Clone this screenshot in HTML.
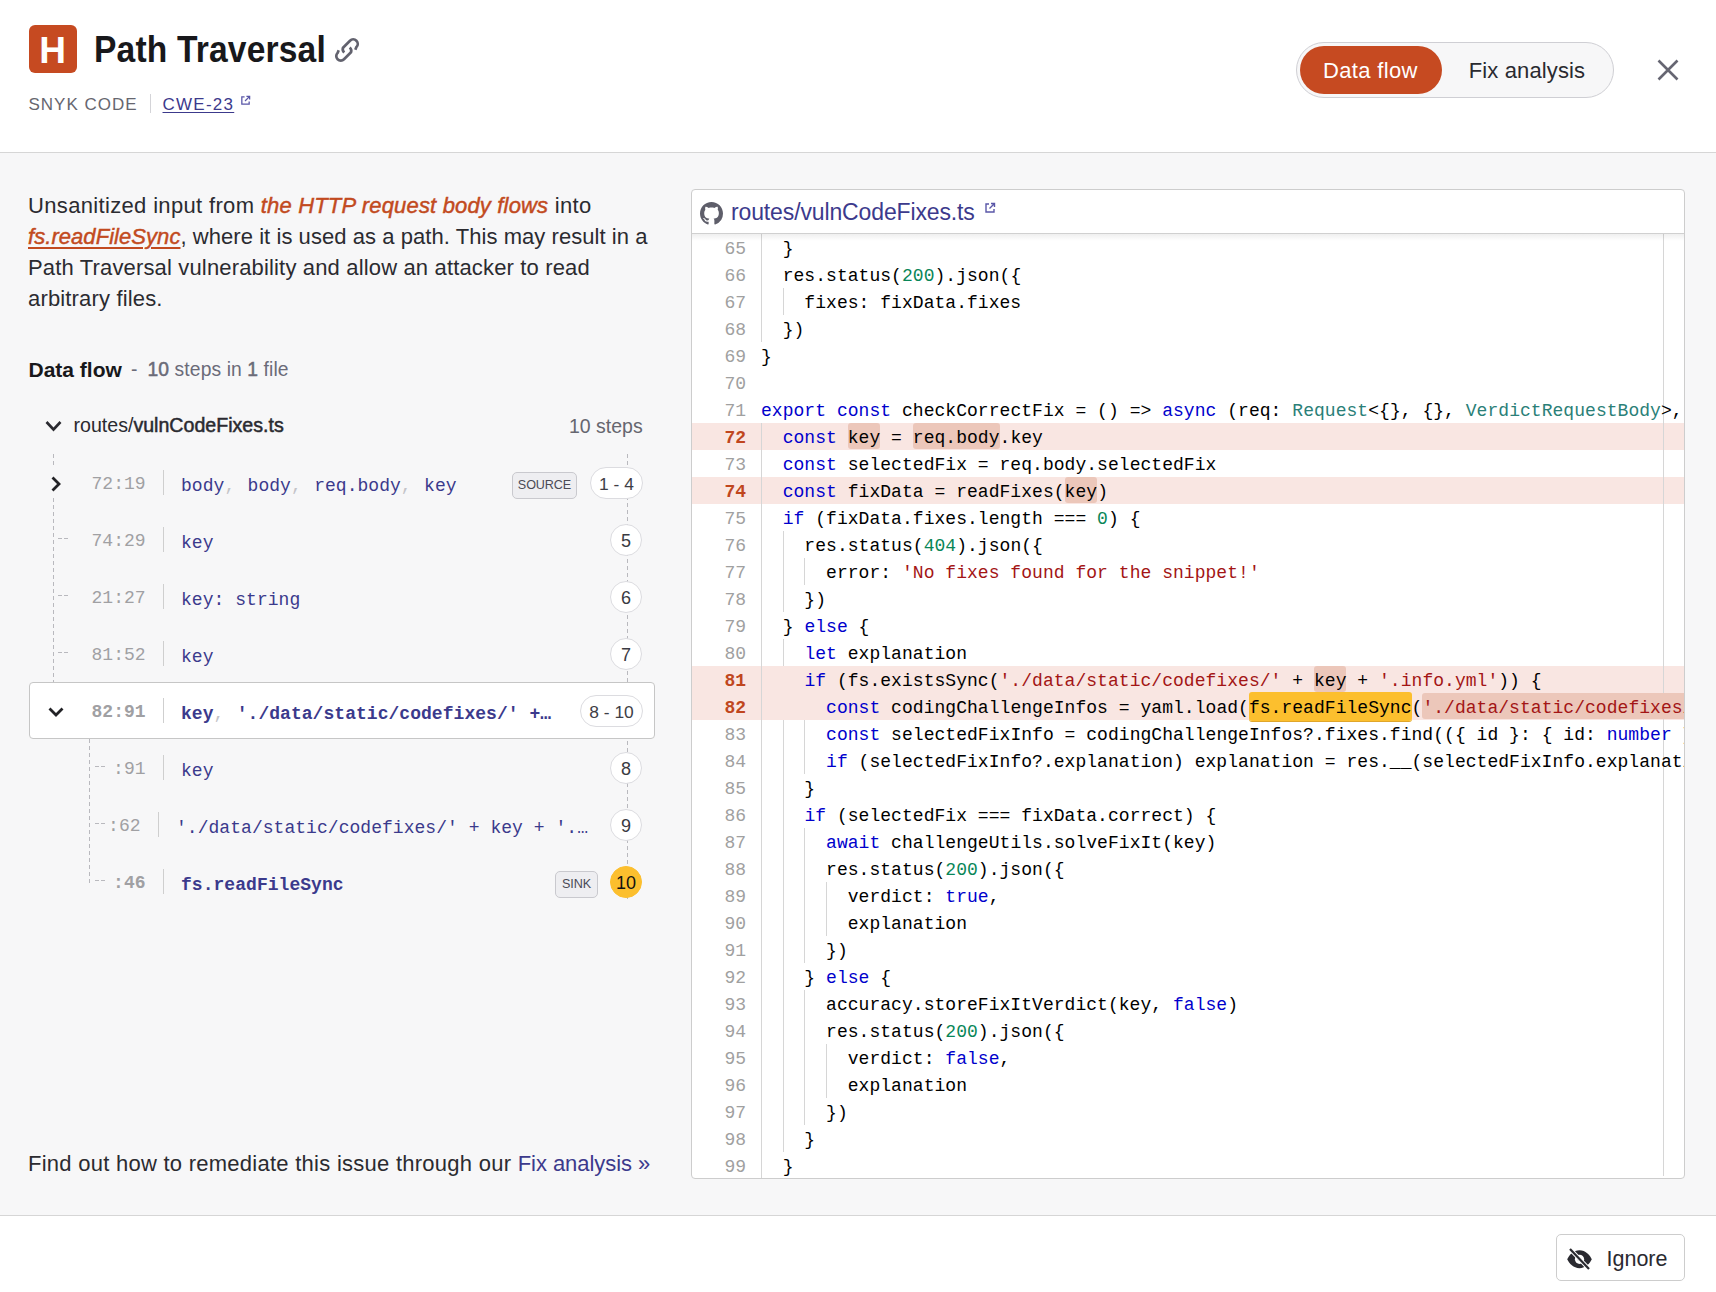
<!DOCTYPE html><html><head><meta charset="utf-8"><title>Path Traversal</title><style>*{margin:0;padding:0}
html,body{width:1716px;height:1292px;overflow:hidden;background:#fff}
body{position:relative;font-family:"Liberation Sans",sans-serif}
i.hl{color:#c24a20;font-style:italic;-webkit-text-stroke:0.45px #c24a20}
.md{font-weight:400;-webkit-text-stroke:0.5px currentColor}
i.u{text-decoration:underline;text-decoration-thickness:2px;text-underline-offset:3px}
</style></head><body><div style="position:absolute;left:0px;top:0px;width:1716px;height:152px;background:#fff"></div>
<div style="position:absolute;left:0px;top:152px;width:1716px;height:1px;background:#d6d6d6"></div>
<div style="position:absolute;left:29px;top:25px;width:48px;height:48px;background:#c64a21;border-radius:6px"></div>
<div style="position:absolute;left:39.3px;top:31.67px;font-size:37px;line-height:37px;color:#fff;font-weight:700;font-style:normal;font-family:'Liberation Sans', sans-serif;letter-spacing:0px;white-space:pre;">H</div>
<div style="position:absolute;left:93.8px;top:32.10px;font-size:36.5px;line-height:36.5px;color:#18181b;font-weight:700;font-style:normal;font-family:'Liberation Sans', sans-serif;letter-spacing:0.18px;white-space:pre;transform:scaleX(0.92);transform-origin:0 0">Path Traversal</div>
<svg style="position:absolute;left:330px;top:33px" width="34" height="34" viewBox="0 0 34 34" fill="none" stroke="#62626e" stroke-width="2.7" stroke-linecap="butt"><path d="M25.3 16.8L26.4 14.1A4.5 4.5 0 0 0 20 7.7L13 14.7A4.5 4.5 0 0 0 14.3 19.6"/><path d="M8.7 17.2L7.6 19.9A4.5 4.5 0 0 0 14 26.3L21 19.3A4.5 4.5 0 0 0 19.7 14.4"/></svg>
<div style="position:absolute;left:28.5px;top:96.11px;font-size:17px;line-height:17px;color:#66666f;font-weight:400;font-style:normal;font-family:'Liberation Sans', sans-serif;letter-spacing:1.0px;white-space:pre;">SNYK CODE</div>
<div style="position:absolute;left:150px;top:94px;width:1px;height:19px;background:#d4d4d8"></div>
<div style="position:absolute;left:162.5px;top:96.11px;font-size:17px;line-height:17px;color:#3c3a8c;font-weight:400;font-style:normal;font-family:'Liberation Sans', sans-serif;letter-spacing:1.25px;white-space:pre;text-decoration:underline;text-underline-offset:2px;text-decoration-thickness:1px">CWE-23</div>
<svg style="position:absolute;left:240px;top:95px" width="11" height="11" viewBox="0 0 12 12" fill="none" stroke="#5a57a8" stroke-width="1.4"><path d="M5 2H2v8h8V7"/><path d="M7 1.5h3.5V5M10.5 1.5 5.5 6.5"/></svg>
<div style="position:absolute;left:1296px;top:42px;width:316px;height:54px;background:#f7f7f8;border:1px solid #cfcfd4;border-radius:28px"></div>
<div style="position:absolute;left:1300px;top:46px;width:142px;height:48px;background:#c64a21;border-radius:24px"></div>
<div style="position:absolute;left:1323px;top:59.67px;font-size:22px;line-height:22px;color:#fff;font-weight:400;font-style:normal;font-family:'Liberation Sans', sans-serif;letter-spacing:0.35px;white-space:pre;">Data flow</div>
<div style="position:absolute;left:1468.8px;top:59.67px;font-size:22px;line-height:22px;color:#2a2a30;font-weight:400;font-style:normal;font-family:'Liberation Sans', sans-serif;letter-spacing:0.12px;white-space:pre;">Fix analysis</div>
<svg style="position:absolute;left:1656px;top:58px" width="24" height="24" viewBox="0 0 24 24" stroke="#666672" stroke-width="2.6" stroke-linecap="butt"><path d="M2.5 2.5 21.5 21.5M21.5 2.5 2.5 21.5"/></svg>
<div style="position:absolute;left:0px;top:153px;width:1716px;height:1062px;background:#f7f7f8"></div>
<div style="position:absolute;left:0px;top:1215px;width:1716px;height:1px;background:#d6d6d6"></div>
<div style="position:absolute;left:0px;top:1216px;width:1716px;height:76px;background:#fff"></div>
<div style="position:absolute;left:28px;top:194.57px;font-size:22px;line-height:22px;color:#2b2b30;font-weight:400;font-style:normal;font-family:'Liberation Sans', sans-serif;letter-spacing:0.34px;white-space:pre;">Unsanitized input from <i class="hl" style="letter-spacing:0.17px">the HTTP request body flows</i> into</div>
<div style="position:absolute;left:28px;top:225.67px;font-size:22px;line-height:22px;color:#2b2b30;font-weight:400;font-style:normal;font-family:'Liberation Sans', sans-serif;letter-spacing:0.056px;white-space:pre;"><i class="hl u">fs.readFileSync</i>, where it is used as a path. This may result in a</div>
<div style="position:absolute;left:28px;top:257.17px;font-size:22px;line-height:22px;color:#2b2b30;font-weight:400;font-style:normal;font-family:'Liberation Sans', sans-serif;letter-spacing:0.158px;white-space:pre;">Path Traversal vulnerability and allow an attacker to read</div>
<div style="position:absolute;left:28px;top:287.87px;font-size:22px;line-height:22px;color:#2b2b30;font-weight:400;font-style:normal;font-family:'Liberation Sans', sans-serif;letter-spacing:0.158px;white-space:pre;">arbitrary files.</div>
<div style="position:absolute;left:28.5px;top:359.02px;font-size:21px;line-height:21px;color:#18181b;font-weight:700;font-style:normal;font-family:'Liberation Sans', sans-serif;letter-spacing:0px;white-space:pre;">Data flow</div>
<div style="position:absolute;left:131px;top:360.46px;font-size:19.3px;line-height:19.3px;color:#6b6b78;font-weight:400;font-style:normal;font-family:'Liberation Sans', sans-serif;letter-spacing:0px;white-space:pre;">-</div>
<div style="position:absolute;left:147.5px;top:360.46px;font-size:19.3px;line-height:19.3px;color:#6b6b78;font-weight:400;font-style:normal;font-family:'Liberation Sans', sans-serif;letter-spacing:0.1px;white-space:pre;"><b class="md">10</b> steps in <b class="md">1</b> file</div>
<svg style="position:absolute;left:43.5px;top:419px" width="18" height="14" viewBox="0 0 18 14" fill="none" stroke="#2a2a30" stroke-width="2.6"><path d="M2.5 3l7 7.5 7-7.5"/></svg>
<div style="position:absolute;left:73.5px;top:416.40px;font-size:19.6px;line-height:19.6px;color:#2a2a30;font-weight:400;font-style:normal;font-family:'Liberation Sans', sans-serif;letter-spacing:0px;white-space:pre;">routes/<span class="md">vulnCodeFixes.ts</span></div>
<div style="position:absolute;left:569px;top:416.69px;font-size:19.5px;line-height:19.5px;color:#66666f;font-weight:400;font-style:normal;font-family:'Liberation Sans', sans-serif;letter-spacing:0px;white-space:pre;">10 steps</div>
<div style="position:absolute;left:53px;top:454px;width:1px;height:12px;background:repeating-linear-gradient(to bottom,#b9b9be 0 4px,transparent 4px 7px)"></div>
<div style="position:absolute;left:53px;top:498px;width:1px;height:184px;background:repeating-linear-gradient(to bottom,#b9b9be 0 4px,transparent 4px 7px)"></div>
<div style="position:absolute;left:627px;top:454px;width:1px;height:446px;background:repeating-linear-gradient(to bottom,#b9b9be 0 4px,transparent 4px 7px)"></div>
<svg style="position:absolute;left:49px;top:475px" width="14" height="18" viewBox="0 0 14 18" fill="none" stroke="#222226" stroke-width="2.8"><path d="M3.5 2.5l6.5 6.5-6.5 6.5"/></svg>
<div style="position:absolute;left:91.5px;top:475.21px;font-size:18px;line-height:18px;color:#a0a0a3;font-weight:400;font-style:normal;font-family:'Liberation Mono', monospace;letter-spacing:0.04px;white-space:pre;">72:19</div>
<div style="position:absolute;left:163px;top:469.5px;width:1px;height:25px;background:#cfcfcf"></div>
<div style="position:absolute;left:181px;top:477.01px;font-size:18px;line-height:18px;color:#3b3a8c;font-weight:400;font-style:normal;font-family:'Liberation Mono', monospace;letter-spacing:0.04px;white-space:pre;">body<span style="color:#c4c4c8;margin-right:1.5px">, </span>body<span style="color:#c4c4c8;margin-right:1.5px">, </span>req.body<span style="color:#c4c4c8;margin-right:1.5px">, </span>key</div>
<div style="position:absolute;left:512px;top:472px;width:65px;height:27px;box-sizing:border-box;border:1px solid #c9c9ce;border-radius:5px;background:#eeeef1;color:#4a4a55;font-family:'Liberation Sans', sans-serif;font-size:12.6px;letter-spacing:-0.1px;line-height:25px;text-align:center">SOURCE</div>
<div style="position:absolute;left:590px;top:467px;width:53px;height:32px;box-sizing:border-box;border:1px solid #dcdce0;border-radius:16px;background:#fff;color:#3e3e46;font-family:'Liberation Sans', sans-serif;font-size:17.4px;line-height:32px;text-align:center;white-space:pre">1 - 4</div>
<div style="position:absolute;left:58px;top:538px;width:11px;height:1px;background:repeating-linear-gradient(to right,#b9b9be 0 4px,transparent 4px 6px)"></div>
<div style="position:absolute;left:91.5px;top:532.21px;font-size:18px;line-height:18px;color:#a0a0a3;font-weight:400;font-style:normal;font-family:'Liberation Mono', monospace;letter-spacing:0.04px;white-space:pre;">74:29</div>
<div style="position:absolute;left:163px;top:526.5px;width:1px;height:25px;background:#cfcfcf"></div>
<div style="position:absolute;left:181px;top:534.01px;font-size:18px;line-height:18px;color:#3b3a8c;font-weight:400;font-style:normal;font-family:'Liberation Mono', monospace;letter-spacing:0.04px;white-space:pre;">key</div>
<div style="position:absolute;left:610px;top:524px;width:32px;height:32px;box-sizing:border-box;border:1px solid #dcdce0;border-radius:50%;background:#fff;color:#3a3a42;font-family:'Liberation Sans', sans-serif;font-size:18px;line-height:32.5px;text-align:center">5</div>
<div style="position:absolute;left:58px;top:595px;width:11px;height:1px;background:repeating-linear-gradient(to right,#b9b9be 0 4px,transparent 4px 6px)"></div>
<div style="position:absolute;left:91.5px;top:589.21px;font-size:18px;line-height:18px;color:#a0a0a3;font-weight:400;font-style:normal;font-family:'Liberation Mono', monospace;letter-spacing:0.04px;white-space:pre;">21:27</div>
<div style="position:absolute;left:163px;top:583.5px;width:1px;height:25px;background:#cfcfcf"></div>
<div style="position:absolute;left:181px;top:591.01px;font-size:18px;line-height:18px;color:#3b3a8c;font-weight:400;font-style:normal;font-family:'Liberation Mono', monospace;letter-spacing:0.04px;white-space:pre;">key: string</div>
<div style="position:absolute;left:610px;top:581px;width:32px;height:32px;box-sizing:border-box;border:1px solid #dcdce0;border-radius:50%;background:#fff;color:#3a3a42;font-family:'Liberation Sans', sans-serif;font-size:18px;line-height:32.5px;text-align:center">6</div>
<div style="position:absolute;left:58px;top:652px;width:11px;height:1px;background:repeating-linear-gradient(to right,#b9b9be 0 4px,transparent 4px 6px)"></div>
<div style="position:absolute;left:91.5px;top:646.21px;font-size:18px;line-height:18px;color:#a0a0a3;font-weight:400;font-style:normal;font-family:'Liberation Mono', monospace;letter-spacing:0.04px;white-space:pre;">81:52</div>
<div style="position:absolute;left:163px;top:640.5px;width:1px;height:25px;background:#cfcfcf"></div>
<div style="position:absolute;left:181px;top:648.01px;font-size:18px;line-height:18px;color:#3b3a8c;font-weight:400;font-style:normal;font-family:'Liberation Mono', monospace;letter-spacing:0.04px;white-space:pre;">key</div>
<div style="position:absolute;left:610px;top:638px;width:32px;height:32px;box-sizing:border-box;border:1px solid #dcdce0;border-radius:50%;background:#fff;color:#3a3a42;font-family:'Liberation Sans', sans-serif;font-size:18px;line-height:32.5px;text-align:center">7</div>
<div style="position:absolute;left:29px;top:682px;width:626px;height:57px;box-sizing:border-box;background:#fff;border:1px solid #c6c6c6;border-radius:4px"></div>
<svg style="position:absolute;left:46.7px;top:705px" width="18" height="14" viewBox="0 0 18 14" fill="none" stroke="#222226" stroke-width="2.8"><path d="M2.5 3.5l6.5 6.5 6.5-6.5"/></svg>
<div style="position:absolute;left:91.5px;top:703.21px;font-size:18px;line-height:18px;color:#a0a0a3;font-weight:700;font-style:normal;font-family:'Liberation Mono', monospace;letter-spacing:0.04px;white-space:pre;">82:91</div>
<div style="position:absolute;left:163px;top:697.5px;width:1px;height:25px;background:#cfcfcf"></div>
<div style="position:absolute;left:181px;top:705.01px;font-size:18px;line-height:18px;color:#3b3a8c;font-weight:700;font-style:normal;font-family:'Liberation Mono', monospace;letter-spacing:0.04px;white-space:pre;">key<span style="color:#c4c4c8;margin-right:1.5px;font-weight:400">, </span>&#x27;./data/static/codefixes/&#x27; +…</div>
<div style="position:absolute;left:580px;top:695px;width:63px;height:32px;box-sizing:border-box;border:1px solid #dcdce0;border-radius:16px;background:#fff;color:#3e3e46;font-family:'Liberation Sans', sans-serif;font-size:17.4px;line-height:32px;text-align:center;white-space:pre">8 - 10</div>
<div style="position:absolute;left:89px;top:739px;width:1px;height:145px;background:repeating-linear-gradient(to bottom,#b9b9be 0 4px,transparent 4px 7px)"></div>
<div style="position:absolute;left:95px;top:766px;width:10px;height:1px;background:repeating-linear-gradient(to right,#b9b9be 0 4px,transparent 4px 6px)"></div>
<div style="position:absolute;left:113.1px;top:760.21px;font-size:18px;line-height:18px;color:#a0a0a3;font-weight:400;font-style:normal;font-family:'Liberation Mono', monospace;letter-spacing:0.04px;white-space:pre;">:91</div>
<div style="position:absolute;left:163px;top:754.5px;width:1px;height:25px;background:#cfcfcf"></div>
<div style="position:absolute;left:181px;top:762.01px;font-size:18px;line-height:18px;color:#3b3a8c;font-weight:400;font-style:normal;font-family:'Liberation Mono', monospace;letter-spacing:0.04px;white-space:pre;">key</div>
<div style="position:absolute;left:610px;top:752px;width:32px;height:32px;box-sizing:border-box;border:1px solid #dcdce0;border-radius:50%;background:#fff;color:#3a3a42;font-family:'Liberation Sans', sans-serif;font-size:18px;line-height:32.5px;text-align:center">8</div>
<div style="position:absolute;left:95px;top:823px;width:10px;height:1px;background:repeating-linear-gradient(to right,#b9b9be 0 4px,transparent 4px 6px)"></div>
<div style="position:absolute;left:108.1px;top:817.21px;font-size:18px;line-height:18px;color:#a0a0a3;font-weight:400;font-style:normal;font-family:'Liberation Mono', monospace;letter-spacing:0.04px;white-space:pre;">:62</div>
<div style="position:absolute;left:158px;top:811.5px;width:1px;height:25px;background:#cfcfcf"></div>
<div style="position:absolute;left:176px;top:819.01px;font-size:18px;line-height:18px;color:#3b3a8c;font-weight:400;font-style:normal;font-family:'Liberation Mono', monospace;letter-spacing:0.04px;white-space:pre;">&#x27;./data/static/codefixes/&#x27; + key + &#x27;.…</div>
<div style="position:absolute;left:610px;top:809px;width:32px;height:32px;box-sizing:border-box;border:1px solid #dcdce0;border-radius:50%;background:#fff;color:#3a3a42;font-family:'Liberation Sans', sans-serif;font-size:18px;line-height:32.5px;text-align:center">9</div>
<div style="position:absolute;left:95px;top:880px;width:10px;height:1px;background:repeating-linear-gradient(to right,#b9b9be 0 4px,transparent 4px 6px)"></div>
<div style="position:absolute;left:113.1px;top:874.21px;font-size:18px;line-height:18px;color:#a0a0a3;font-weight:700;font-style:normal;font-family:'Liberation Mono', monospace;letter-spacing:0.04px;white-space:pre;">:46</div>
<div style="position:absolute;left:163px;top:868.5px;width:1px;height:25px;background:#cfcfcf"></div>
<div style="position:absolute;left:181px;top:876.01px;font-size:18px;line-height:18px;color:#3b3a8c;font-weight:700;font-style:normal;font-family:'Liberation Mono', monospace;letter-spacing:0.04px;white-space:pre;">fs.readFileSync</div>
<div style="position:absolute;left:610px;top:866px;width:32px;height:32px;box-sizing:border-box;border:1px solid #fcbf2e;border-radius:50%;background:#fcbf2e;color:#111;font-family:'Liberation Sans', sans-serif;font-size:18px;line-height:32.5px;text-align:center">10</div>
<div style="position:absolute;left:555px;top:871px;width:43px;height:27px;box-sizing:border-box;border:1px solid #c9c9ce;border-radius:5px;background:#eeeef1;color:#4a4a55;font-family:'Liberation Sans', sans-serif;font-size:12.6px;letter-spacing:-0.1px;line-height:25px;text-align:center">SINK</div>
<div style="position:absolute;left:28px;top:1152.67px;font-size:22px;line-height:22px;color:#2b2b30;font-weight:400;font-style:normal;font-family:'Liberation Sans', sans-serif;letter-spacing:0.26px;white-space:pre;">Find out how to remediate this issue through our <span style="color:#3c3a8c;letter-spacing:-0.05px">Fix analysis »</span></div>
<div style="position:absolute;left:1556px;top:1234px;width:129px;height:47px;box-sizing:border-box;background:#fff;border:1px solid #cdcdcd;border-radius:5px"></div>
<svg style="position:absolute;left:1566px;top:1247px" width="27" height="24" viewBox="0 0 27 24"><path d="M13.5 3.2C7.5 3.2 3.2 8 1.2 12.3 3.2 16.6 7.5 21.2 13.5 21.2s10.3-4.6 12.3-8.9C23.8 8 19.5 3.2 13.5 3.2z" fill="#2a2a30"/><circle cx="13.5" cy="12.3" r="4.6" fill="#fff"/><circle cx="13.5" cy="12.3" r="2" fill="#2a2a30"/><path d="M4 2 23 22" stroke="#fff" stroke-width="4"/><path d="M4 2 23 22" stroke="#2a2a30" stroke-width="2.2"/></svg>
<div style="position:absolute;left:1606.5px;top:1248.50px;font-size:21.5px;line-height:21.5px;color:#2a2a30;font-weight:400;font-style:normal;font-family:'Liberation Sans', sans-serif;letter-spacing:0px;white-space:pre;">Ignore</div>
<div style="position:absolute;left:691px;top:189px;width:994px;height:990px;box-sizing:border-box;border:1px solid #cdcdcd;border-radius:4px;background:#fff;overflow:hidden">
<svg style="position:absolute;left:8px;top:12px" width="23" height="23" viewBox="0 0 16 16"><path fill="#5e5e6a" d="M8 0C3.58 0 0 3.58 0 8c0 3.54 2.29 6.53 5.47 7.59.4.07.55-.17.55-.38 0-.19-.01-.82-.01-1.49-2.01.37-2.53-.49-2.69-.94-.09-.23-.48-.94-.82-1.13-.28-.15-.68-.52-.01-.53.63-.01 1.08.58 1.23.82.72 1.21 1.87.87 2.33.66.07-.52.28-.87.51-1.07-1.78-.2-3.64-.89-3.64-3.95 0-.87.31-1.59.82-2.15-.08-.2-.36-1.02.08-2.12 0 0 .67-.21 2.2.82.64-.18 1.32-.27 2-.27.68 0 1.36.09 2 .27 1.53-1.04 2.2-.82 2.2-.82.44 1.1.16 1.92.08 2.12.51.56.82 1.27.82 2.15 0 3.07-1.87 3.75-3.65 3.95.29.25.54.73.54 1.48 0 1.07-.01 1.93-.01 2.2 0 .21.15.46.55.38A8.013 8.013 0 0016 8c0-4.42-3.58-8-8-8z"/></svg>
<div style="position:absolute;left:39px;top:10.53px;font-size:23px;line-height:23px;color:#3c3a8c;font-weight:400;font-style:normal;font-family:'Liberation Sans', sans-serif;letter-spacing:-0.13px;white-space:pre;">routes/vulnCodeFixes.ts</div>
<svg style="position:absolute;left:292px;top:12px" width="12" height="12" viewBox="0 0 12 12" fill="none" stroke="#5a57a8" stroke-width="1.4"><path d="M5 2H2v8h8V7"/><path d="M7 1.5h3.5V5M10.5 1.5 5.5 6.5"/></svg>
<div style="position:absolute;left:0;top:43px;width:100%;height:1px;background:#d0d0d0"></div>
<div style="position:absolute;left:0;top:44px;width:100%;height:7px;background:linear-gradient(#00000010,#00000000);z-index:5"></div>
<div style="position:absolute;left:0;top:44px;width:100%;height:27px;"></div>
<div style="position:absolute;left:69.0px;top:44px;width:1px;height:27px;background:#d6d6d6"></div>
<div style="position:absolute;left:32.4px;top:44px;height:27px;font-family:'Liberation Mono', monospace;font-size:18px;line-height:27px;color:#a0a0a0;font-weight:normal;white-space:pre"><span style="position:relative;top:1.7px">65</span></div>
<div style="position:absolute;z-index:2;left:69px;top:44px;height:27px;font-family:'Liberation Mono', monospace;font-size:18px;line-height:27px;color:#000;white-space:pre;letter-spacing:0.04px"><span style="position:relative;top:1.7px">  }</span></div>
<div style="position:absolute;left:0;top:71px;width:100%;height:27px;"></div>
<div style="position:absolute;left:69.0px;top:71px;width:1px;height:27px;background:#d6d6d6"></div>
<div style="position:absolute;left:32.4px;top:71px;height:27px;font-family:'Liberation Mono', monospace;font-size:18px;line-height:27px;color:#a0a0a0;font-weight:normal;white-space:pre"><span style="position:relative;top:1.7px">66</span></div>
<div style="position:absolute;z-index:2;left:69px;top:71px;height:27px;font-family:'Liberation Mono', monospace;font-size:18px;line-height:27px;color:#000;white-space:pre;letter-spacing:0.04px"><span style="position:relative;top:1.7px">  res.status(<span style="color:#098658">200</span>).json({</span></div>
<div style="position:absolute;left:0;top:98px;width:100%;height:27px;"></div>
<div style="position:absolute;left:69.0px;top:98px;width:1px;height:27px;background:#d6d6d6"></div>
<div style="position:absolute;left:90.6px;top:98px;width:1px;height:27px;background:#d6d6d6"></div>
<div style="position:absolute;left:32.4px;top:98px;height:27px;font-family:'Liberation Mono', monospace;font-size:18px;line-height:27px;color:#a0a0a0;font-weight:normal;white-space:pre"><span style="position:relative;top:1.7px">67</span></div>
<div style="position:absolute;z-index:2;left:69px;top:98px;height:27px;font-family:'Liberation Mono', monospace;font-size:18px;line-height:27px;color:#000;white-space:pre;letter-spacing:0.04px"><span style="position:relative;top:1.7px">    fixes: fixData.fixes</span></div>
<div style="position:absolute;left:0;top:125px;width:100%;height:27px;"></div>
<div style="position:absolute;left:69.0px;top:125px;width:1px;height:27px;background:#d6d6d6"></div>
<div style="position:absolute;left:32.4px;top:125px;height:27px;font-family:'Liberation Mono', monospace;font-size:18px;line-height:27px;color:#a0a0a0;font-weight:normal;white-space:pre"><span style="position:relative;top:1.7px">68</span></div>
<div style="position:absolute;z-index:2;left:69px;top:125px;height:27px;font-family:'Liberation Mono', monospace;font-size:18px;line-height:27px;color:#000;white-space:pre;letter-spacing:0.04px"><span style="position:relative;top:1.7px">  })</span></div>
<div style="position:absolute;left:0;top:152px;width:100%;height:27px;"></div>
<div style="position:absolute;left:32.4px;top:152px;height:27px;font-family:'Liberation Mono', monospace;font-size:18px;line-height:27px;color:#a0a0a0;font-weight:normal;white-space:pre"><span style="position:relative;top:1.7px">69</span></div>
<div style="position:absolute;z-index:2;left:69px;top:152px;height:27px;font-family:'Liberation Mono', monospace;font-size:18px;line-height:27px;color:#000;white-space:pre;letter-spacing:0.04px"><span style="position:relative;top:1.7px">}</span></div>
<div style="position:absolute;left:0;top:179px;width:100%;height:27px;"></div>
<div style="position:absolute;left:32.4px;top:179px;height:27px;font-family:'Liberation Mono', monospace;font-size:18px;line-height:27px;color:#a0a0a0;font-weight:normal;white-space:pre"><span style="position:relative;top:1.7px">70</span></div>
<div style="position:absolute;z-index:2;left:69px;top:179px;height:27px;font-family:'Liberation Mono', monospace;font-size:18px;line-height:27px;color:#000;white-space:pre;letter-spacing:0.04px"><span style="position:relative;top:1.7px"></span></div>
<div style="position:absolute;left:0;top:206px;width:100%;height:27px;"></div>
<div style="position:absolute;left:32.4px;top:206px;height:27px;font-family:'Liberation Mono', monospace;font-size:18px;line-height:27px;color:#a0a0a0;font-weight:normal;white-space:pre"><span style="position:relative;top:1.7px">71</span></div>
<div style="position:absolute;z-index:2;left:69px;top:206px;height:27px;font-family:'Liberation Mono', monospace;font-size:18px;line-height:27px;color:#000;white-space:pre;letter-spacing:0.04px"><span style="position:relative;top:1.7px"><span style="color:#0000cc">export</span> <span style="color:#0000cc">const</span> checkCorrectFix = () =&gt; <span style="color:#0000cc">async</span> (req: <span style="color:#2b7f78">Request</span>&lt;{}, {}, <span style="color:#2b7f78">VerdictRequestBody</span>&gt;, res: <span style="color:#2b7f78">Response</span>) =&gt; {</span></div>
<div style="position:absolute;left:0;top:233px;width:100%;height:27px;background:#f9e6e2;"></div>
<div style="position:absolute;left:69.0px;top:233px;width:1px;height:27px;background:#d6d6d6"></div>
<div style="position:absolute;left:32.4px;top:233px;height:27px;font-family:'Liberation Mono', monospace;font-size:18px;line-height:27px;color:#c0461e;font-weight:bold;white-space:pre"><span style="position:relative;top:1.7px">72</span></div>
<div style="position:absolute;z-index:2;left:69px;top:233px;height:27px;font-family:'Liberation Mono', monospace;font-size:18px;line-height:27px;color:#000;white-space:pre;letter-spacing:0.04px"><span style="position:relative;top:1.7px">  <span style="color:#0000cc">const</span> <span style="background:#ecc7ba;border-radius:3px;padding:5px 0 1.6px">key</span> = <span style="background:#ecc7ba;border-radius:3px;padding:5px 0 1.6px">req.body</span>.key</span></div>
<div style="position:absolute;left:0;top:260px;width:100%;height:27px;"></div>
<div style="position:absolute;left:69.0px;top:260px;width:1px;height:27px;background:#d6d6d6"></div>
<div style="position:absolute;left:32.4px;top:260px;height:27px;font-family:'Liberation Mono', monospace;font-size:18px;line-height:27px;color:#a0a0a0;font-weight:normal;white-space:pre"><span style="position:relative;top:1.7px">73</span></div>
<div style="position:absolute;z-index:2;left:69px;top:260px;height:27px;font-family:'Liberation Mono', monospace;font-size:18px;line-height:27px;color:#000;white-space:pre;letter-spacing:0.04px"><span style="position:relative;top:1.7px">  <span style="color:#0000cc">const</span> selectedFix = req.body.selectedFix</span></div>
<div style="position:absolute;left:0;top:287px;width:100%;height:27px;background:#f9e6e2;"></div>
<div style="position:absolute;left:69.0px;top:287px;width:1px;height:27px;background:#d6d6d6"></div>
<div style="position:absolute;left:32.4px;top:287px;height:27px;font-family:'Liberation Mono', monospace;font-size:18px;line-height:27px;color:#c0461e;font-weight:bold;white-space:pre"><span style="position:relative;top:1.7px">74</span></div>
<div style="position:absolute;z-index:2;left:69px;top:287px;height:27px;font-family:'Liberation Mono', monospace;font-size:18px;line-height:27px;color:#000;white-space:pre;letter-spacing:0.04px"><span style="position:relative;top:1.7px">  <span style="color:#0000cc">const</span> fixData = readFixes(<span style="background:#ecc7ba;border-radius:3px;padding:5px 0 1.6px">key</span>)</span></div>
<div style="position:absolute;left:0;top:314px;width:100%;height:27px;"></div>
<div style="position:absolute;left:69.0px;top:314px;width:1px;height:27px;background:#d6d6d6"></div>
<div style="position:absolute;left:32.4px;top:314px;height:27px;font-family:'Liberation Mono', monospace;font-size:18px;line-height:27px;color:#a0a0a0;font-weight:normal;white-space:pre"><span style="position:relative;top:1.7px">75</span></div>
<div style="position:absolute;z-index:2;left:69px;top:314px;height:27px;font-family:'Liberation Mono', monospace;font-size:18px;line-height:27px;color:#000;white-space:pre;letter-spacing:0.04px"><span style="position:relative;top:1.7px">  <span style="color:#0000cc">if</span> (fixData.fixes.length === <span style="color:#098658">0</span>) {</span></div>
<div style="position:absolute;left:0;top:341px;width:100%;height:27px;"></div>
<div style="position:absolute;left:69.0px;top:341px;width:1px;height:27px;background:#d6d6d6"></div>
<div style="position:absolute;left:90.6px;top:341px;width:1px;height:27px;background:#d6d6d6"></div>
<div style="position:absolute;left:32.4px;top:341px;height:27px;font-family:'Liberation Mono', monospace;font-size:18px;line-height:27px;color:#a0a0a0;font-weight:normal;white-space:pre"><span style="position:relative;top:1.7px">76</span></div>
<div style="position:absolute;z-index:2;left:69px;top:341px;height:27px;font-family:'Liberation Mono', monospace;font-size:18px;line-height:27px;color:#000;white-space:pre;letter-spacing:0.04px"><span style="position:relative;top:1.7px">    res.status(<span style="color:#098658">404</span>).json({</span></div>
<div style="position:absolute;left:0;top:368px;width:100%;height:27px;"></div>
<div style="position:absolute;left:69.0px;top:368px;width:1px;height:27px;background:#d6d6d6"></div>
<div style="position:absolute;left:90.6px;top:368px;width:1px;height:27px;background:#d6d6d6"></div>
<div style="position:absolute;left:112.2px;top:368px;width:1px;height:27px;background:#d6d6d6"></div>
<div style="position:absolute;left:32.4px;top:368px;height:27px;font-family:'Liberation Mono', monospace;font-size:18px;line-height:27px;color:#a0a0a0;font-weight:normal;white-space:pre"><span style="position:relative;top:1.7px">77</span></div>
<div style="position:absolute;z-index:2;left:69px;top:368px;height:27px;font-family:'Liberation Mono', monospace;font-size:18px;line-height:27px;color:#000;white-space:pre;letter-spacing:0.04px"><span style="position:relative;top:1.7px">      error: <span style="color:#a31515">&#x27;No fixes found for the snippet!&#x27;</span></span></div>
<div style="position:absolute;left:0;top:395px;width:100%;height:27px;"></div>
<div style="position:absolute;left:69.0px;top:395px;width:1px;height:27px;background:#d6d6d6"></div>
<div style="position:absolute;left:90.6px;top:395px;width:1px;height:27px;background:#d6d6d6"></div>
<div style="position:absolute;left:32.4px;top:395px;height:27px;font-family:'Liberation Mono', monospace;font-size:18px;line-height:27px;color:#a0a0a0;font-weight:normal;white-space:pre"><span style="position:relative;top:1.7px">78</span></div>
<div style="position:absolute;z-index:2;left:69px;top:395px;height:27px;font-family:'Liberation Mono', monospace;font-size:18px;line-height:27px;color:#000;white-space:pre;letter-spacing:0.04px"><span style="position:relative;top:1.7px">    })</span></div>
<div style="position:absolute;left:0;top:422px;width:100%;height:27px;"></div>
<div style="position:absolute;left:69.0px;top:422px;width:1px;height:27px;background:#d6d6d6"></div>
<div style="position:absolute;left:32.4px;top:422px;height:27px;font-family:'Liberation Mono', monospace;font-size:18px;line-height:27px;color:#a0a0a0;font-weight:normal;white-space:pre"><span style="position:relative;top:1.7px">79</span></div>
<div style="position:absolute;z-index:2;left:69px;top:422px;height:27px;font-family:'Liberation Mono', monospace;font-size:18px;line-height:27px;color:#000;white-space:pre;letter-spacing:0.04px"><span style="position:relative;top:1.7px">  } <span style="color:#0000cc">else</span> {</span></div>
<div style="position:absolute;left:0;top:449px;width:100%;height:27px;"></div>
<div style="position:absolute;left:69.0px;top:449px;width:1px;height:27px;background:#d6d6d6"></div>
<div style="position:absolute;left:90.6px;top:449px;width:1px;height:27px;background:#d6d6d6"></div>
<div style="position:absolute;left:32.4px;top:449px;height:27px;font-family:'Liberation Mono', monospace;font-size:18px;line-height:27px;color:#a0a0a0;font-weight:normal;white-space:pre"><span style="position:relative;top:1.7px">80</span></div>
<div style="position:absolute;z-index:2;left:69px;top:449px;height:27px;font-family:'Liberation Mono', monospace;font-size:18px;line-height:27px;color:#000;white-space:pre;letter-spacing:0.04px"><span style="position:relative;top:1.7px">    <span style="color:#0000cc">let</span> explanation</span></div>
<div style="position:absolute;left:0;top:476px;width:100%;height:27px;background:#f9e6e2;"></div>
<div style="position:absolute;left:69.0px;top:476px;width:1px;height:27px;background:#d6d6d6"></div>
<div style="position:absolute;left:32.4px;top:476px;height:27px;font-family:'Liberation Mono', monospace;font-size:18px;line-height:27px;color:#c0461e;font-weight:bold;white-space:pre"><span style="position:relative;top:1.7px">81</span></div>
<div style="position:absolute;z-index:2;left:69px;top:476px;height:27px;font-family:'Liberation Mono', monospace;font-size:18px;line-height:27px;color:#000;white-space:pre;letter-spacing:0.04px"><span style="position:relative;top:1.7px">    <span style="color:#0000cc">if</span> (fs.existsSync(<span style="color:#a31515">&#x27;./data/static/codefixes/&#x27;</span> + <span style="background:#ecc7ba;border-radius:3px;padding:5px 0 1.6px">key</span> + <span style="color:#a31515">&#x27;.info.yml&#x27;</span>)) {</span></div>
<div style="position:absolute;left:0;top:503px;width:100%;height:27px;background:#f9e6e2;"></div>
<div style="position:absolute;left:69.0px;top:503px;width:1px;height:27px;background:#d6d6d6"></div>
<div style="position:absolute;left:32.4px;top:503px;height:27px;font-family:'Liberation Mono', monospace;font-size:18px;line-height:27px;color:#c0461e;font-weight:bold;white-space:pre"><span style="position:relative;top:1.7px">82</span></div>
<div style="position:absolute;z-index:2;left:69px;top:503px;height:27px;font-family:'Liberation Mono', monospace;font-size:18px;line-height:27px;color:#000;white-space:pre;letter-spacing:0.04px"><span style="position:relative;top:1.7px">      <span style="color:#0000cc">const</span> codingChallengeInfos = yaml.load(<span style="background:#fcbf2e;border-radius:3px;padding:5.5px 0 3px;box-shadow:0 1px 0 #e0a62a">fs.readFileSync</span>(<span style="background:#ecc7ba;border-radius:3px;padding:5px 0 1.6px"><span style="color:#a31515">&#x27;./data/static/codefixes/&#x27;</span> + key + <span style="color:#a31515">&#x27;.info.yml&#x27;</span></span>, <span style="color:#a31515">&#x27;utf8&#x27;</span>))</span></div>
<div style="position:absolute;left:0;top:530px;width:100%;height:27px;"></div>
<div style="position:absolute;left:69.0px;top:530px;width:1px;height:27px;background:#d6d6d6"></div>
<div style="position:absolute;left:90.6px;top:530px;width:1px;height:27px;background:#d6d6d6"></div>
<div style="position:absolute;left:112.2px;top:530px;width:1px;height:27px;background:#d6d6d6"></div>
<div style="position:absolute;left:32.4px;top:530px;height:27px;font-family:'Liberation Mono', monospace;font-size:18px;line-height:27px;color:#a0a0a0;font-weight:normal;white-space:pre"><span style="position:relative;top:1.7px">83</span></div>
<div style="position:absolute;z-index:2;left:69px;top:530px;height:27px;font-family:'Liberation Mono', monospace;font-size:18px;line-height:27px;color:#000;white-space:pre;letter-spacing:0.04px"><span style="position:relative;top:1.7px">      <span style="color:#0000cc">const</span> selectedFixInfo = codingChallengeInfos?.fixes.find(({ id }: { id: <span style="color:#0000cc">number</span> }) =&gt; id === selectedFix)</span></div>
<div style="position:absolute;left:0;top:557px;width:100%;height:27px;"></div>
<div style="position:absolute;left:69.0px;top:557px;width:1px;height:27px;background:#d6d6d6"></div>
<div style="position:absolute;left:90.6px;top:557px;width:1px;height:27px;background:#d6d6d6"></div>
<div style="position:absolute;left:112.2px;top:557px;width:1px;height:27px;background:#d6d6d6"></div>
<div style="position:absolute;left:32.4px;top:557px;height:27px;font-family:'Liberation Mono', monospace;font-size:18px;line-height:27px;color:#a0a0a0;font-weight:normal;white-space:pre"><span style="position:relative;top:1.7px">84</span></div>
<div style="position:absolute;z-index:2;left:69px;top:557px;height:27px;font-family:'Liberation Mono', monospace;font-size:18px;line-height:27px;color:#000;white-space:pre;letter-spacing:0.04px"><span style="position:relative;top:1.7px">      <span style="color:#0000cc">if</span> (selectedFixInfo?.explanation) explanation = res.__(selectedFixInfo.explanation)</span></div>
<div style="position:absolute;left:0;top:584px;width:100%;height:27px;"></div>
<div style="position:absolute;left:69.0px;top:584px;width:1px;height:27px;background:#d6d6d6"></div>
<div style="position:absolute;left:90.6px;top:584px;width:1px;height:27px;background:#d6d6d6"></div>
<div style="position:absolute;left:32.4px;top:584px;height:27px;font-family:'Liberation Mono', monospace;font-size:18px;line-height:27px;color:#a0a0a0;font-weight:normal;white-space:pre"><span style="position:relative;top:1.7px">85</span></div>
<div style="position:absolute;z-index:2;left:69px;top:584px;height:27px;font-family:'Liberation Mono', monospace;font-size:18px;line-height:27px;color:#000;white-space:pre;letter-spacing:0.04px"><span style="position:relative;top:1.7px">    }</span></div>
<div style="position:absolute;left:0;top:611px;width:100%;height:27px;"></div>
<div style="position:absolute;left:69.0px;top:611px;width:1px;height:27px;background:#d6d6d6"></div>
<div style="position:absolute;left:90.6px;top:611px;width:1px;height:27px;background:#d6d6d6"></div>
<div style="position:absolute;left:32.4px;top:611px;height:27px;font-family:'Liberation Mono', monospace;font-size:18px;line-height:27px;color:#a0a0a0;font-weight:normal;white-space:pre"><span style="position:relative;top:1.7px">86</span></div>
<div style="position:absolute;z-index:2;left:69px;top:611px;height:27px;font-family:'Liberation Mono', monospace;font-size:18px;line-height:27px;color:#000;white-space:pre;letter-spacing:0.04px"><span style="position:relative;top:1.7px">    <span style="color:#0000cc">if</span> (selectedFix === fixData.correct) {</span></div>
<div style="position:absolute;left:0;top:638px;width:100%;height:27px;"></div>
<div style="position:absolute;left:69.0px;top:638px;width:1px;height:27px;background:#d6d6d6"></div>
<div style="position:absolute;left:90.6px;top:638px;width:1px;height:27px;background:#d6d6d6"></div>
<div style="position:absolute;left:112.2px;top:638px;width:1px;height:27px;background:#d6d6d6"></div>
<div style="position:absolute;left:32.4px;top:638px;height:27px;font-family:'Liberation Mono', monospace;font-size:18px;line-height:27px;color:#a0a0a0;font-weight:normal;white-space:pre"><span style="position:relative;top:1.7px">87</span></div>
<div style="position:absolute;z-index:2;left:69px;top:638px;height:27px;font-family:'Liberation Mono', monospace;font-size:18px;line-height:27px;color:#000;white-space:pre;letter-spacing:0.04px"><span style="position:relative;top:1.7px">      <span style="color:#0000cc">await</span> challengeUtils.solveFixIt(key)</span></div>
<div style="position:absolute;left:0;top:665px;width:100%;height:27px;"></div>
<div style="position:absolute;left:69.0px;top:665px;width:1px;height:27px;background:#d6d6d6"></div>
<div style="position:absolute;left:90.6px;top:665px;width:1px;height:27px;background:#d6d6d6"></div>
<div style="position:absolute;left:112.2px;top:665px;width:1px;height:27px;background:#d6d6d6"></div>
<div style="position:absolute;left:32.4px;top:665px;height:27px;font-family:'Liberation Mono', monospace;font-size:18px;line-height:27px;color:#a0a0a0;font-weight:normal;white-space:pre"><span style="position:relative;top:1.7px">88</span></div>
<div style="position:absolute;z-index:2;left:69px;top:665px;height:27px;font-family:'Liberation Mono', monospace;font-size:18px;line-height:27px;color:#000;white-space:pre;letter-spacing:0.04px"><span style="position:relative;top:1.7px">      res.status(<span style="color:#098658">200</span>).json({</span></div>
<div style="position:absolute;left:0;top:692px;width:100%;height:27px;"></div>
<div style="position:absolute;left:69.0px;top:692px;width:1px;height:27px;background:#d6d6d6"></div>
<div style="position:absolute;left:90.6px;top:692px;width:1px;height:27px;background:#d6d6d6"></div>
<div style="position:absolute;left:112.2px;top:692px;width:1px;height:27px;background:#d6d6d6"></div>
<div style="position:absolute;left:133.8px;top:692px;width:1px;height:27px;background:#d6d6d6"></div>
<div style="position:absolute;left:32.4px;top:692px;height:27px;font-family:'Liberation Mono', monospace;font-size:18px;line-height:27px;color:#a0a0a0;font-weight:normal;white-space:pre"><span style="position:relative;top:1.7px">89</span></div>
<div style="position:absolute;z-index:2;left:69px;top:692px;height:27px;font-family:'Liberation Mono', monospace;font-size:18px;line-height:27px;color:#000;white-space:pre;letter-spacing:0.04px"><span style="position:relative;top:1.7px">        verdict: <span style="color:#0000cc">true</span>,</span></div>
<div style="position:absolute;left:0;top:719px;width:100%;height:27px;"></div>
<div style="position:absolute;left:69.0px;top:719px;width:1px;height:27px;background:#d6d6d6"></div>
<div style="position:absolute;left:90.6px;top:719px;width:1px;height:27px;background:#d6d6d6"></div>
<div style="position:absolute;left:112.2px;top:719px;width:1px;height:27px;background:#d6d6d6"></div>
<div style="position:absolute;left:133.8px;top:719px;width:1px;height:27px;background:#d6d6d6"></div>
<div style="position:absolute;left:32.4px;top:719px;height:27px;font-family:'Liberation Mono', monospace;font-size:18px;line-height:27px;color:#a0a0a0;font-weight:normal;white-space:pre"><span style="position:relative;top:1.7px">90</span></div>
<div style="position:absolute;z-index:2;left:69px;top:719px;height:27px;font-family:'Liberation Mono', monospace;font-size:18px;line-height:27px;color:#000;white-space:pre;letter-spacing:0.04px"><span style="position:relative;top:1.7px">        explanation</span></div>
<div style="position:absolute;left:0;top:746px;width:100%;height:27px;"></div>
<div style="position:absolute;left:69.0px;top:746px;width:1px;height:27px;background:#d6d6d6"></div>
<div style="position:absolute;left:90.6px;top:746px;width:1px;height:27px;background:#d6d6d6"></div>
<div style="position:absolute;left:112.2px;top:746px;width:1px;height:27px;background:#d6d6d6"></div>
<div style="position:absolute;left:32.4px;top:746px;height:27px;font-family:'Liberation Mono', monospace;font-size:18px;line-height:27px;color:#a0a0a0;font-weight:normal;white-space:pre"><span style="position:relative;top:1.7px">91</span></div>
<div style="position:absolute;z-index:2;left:69px;top:746px;height:27px;font-family:'Liberation Mono', monospace;font-size:18px;line-height:27px;color:#000;white-space:pre;letter-spacing:0.04px"><span style="position:relative;top:1.7px">      })</span></div>
<div style="position:absolute;left:0;top:773px;width:100%;height:27px;"></div>
<div style="position:absolute;left:69.0px;top:773px;width:1px;height:27px;background:#d6d6d6"></div>
<div style="position:absolute;left:90.6px;top:773px;width:1px;height:27px;background:#d6d6d6"></div>
<div style="position:absolute;left:32.4px;top:773px;height:27px;font-family:'Liberation Mono', monospace;font-size:18px;line-height:27px;color:#a0a0a0;font-weight:normal;white-space:pre"><span style="position:relative;top:1.7px">92</span></div>
<div style="position:absolute;z-index:2;left:69px;top:773px;height:27px;font-family:'Liberation Mono', monospace;font-size:18px;line-height:27px;color:#000;white-space:pre;letter-spacing:0.04px"><span style="position:relative;top:1.7px">    } <span style="color:#0000cc">else</span> {</span></div>
<div style="position:absolute;left:0;top:800px;width:100%;height:27px;"></div>
<div style="position:absolute;left:69.0px;top:800px;width:1px;height:27px;background:#d6d6d6"></div>
<div style="position:absolute;left:90.6px;top:800px;width:1px;height:27px;background:#d6d6d6"></div>
<div style="position:absolute;left:112.2px;top:800px;width:1px;height:27px;background:#d6d6d6"></div>
<div style="position:absolute;left:32.4px;top:800px;height:27px;font-family:'Liberation Mono', monospace;font-size:18px;line-height:27px;color:#a0a0a0;font-weight:normal;white-space:pre"><span style="position:relative;top:1.7px">93</span></div>
<div style="position:absolute;z-index:2;left:69px;top:800px;height:27px;font-family:'Liberation Mono', monospace;font-size:18px;line-height:27px;color:#000;white-space:pre;letter-spacing:0.04px"><span style="position:relative;top:1.7px">      accuracy.storeFixItVerdict(key, <span style="color:#0000cc">false</span>)</span></div>
<div style="position:absolute;left:0;top:827px;width:100%;height:27px;"></div>
<div style="position:absolute;left:69.0px;top:827px;width:1px;height:27px;background:#d6d6d6"></div>
<div style="position:absolute;left:90.6px;top:827px;width:1px;height:27px;background:#d6d6d6"></div>
<div style="position:absolute;left:112.2px;top:827px;width:1px;height:27px;background:#d6d6d6"></div>
<div style="position:absolute;left:32.4px;top:827px;height:27px;font-family:'Liberation Mono', monospace;font-size:18px;line-height:27px;color:#a0a0a0;font-weight:normal;white-space:pre"><span style="position:relative;top:1.7px">94</span></div>
<div style="position:absolute;z-index:2;left:69px;top:827px;height:27px;font-family:'Liberation Mono', monospace;font-size:18px;line-height:27px;color:#000;white-space:pre;letter-spacing:0.04px"><span style="position:relative;top:1.7px">      res.status(<span style="color:#098658">200</span>).json({</span></div>
<div style="position:absolute;left:0;top:854px;width:100%;height:27px;"></div>
<div style="position:absolute;left:69.0px;top:854px;width:1px;height:27px;background:#d6d6d6"></div>
<div style="position:absolute;left:90.6px;top:854px;width:1px;height:27px;background:#d6d6d6"></div>
<div style="position:absolute;left:112.2px;top:854px;width:1px;height:27px;background:#d6d6d6"></div>
<div style="position:absolute;left:133.8px;top:854px;width:1px;height:27px;background:#d6d6d6"></div>
<div style="position:absolute;left:32.4px;top:854px;height:27px;font-family:'Liberation Mono', monospace;font-size:18px;line-height:27px;color:#a0a0a0;font-weight:normal;white-space:pre"><span style="position:relative;top:1.7px">95</span></div>
<div style="position:absolute;z-index:2;left:69px;top:854px;height:27px;font-family:'Liberation Mono', monospace;font-size:18px;line-height:27px;color:#000;white-space:pre;letter-spacing:0.04px"><span style="position:relative;top:1.7px">        verdict: <span style="color:#0000cc">false</span>,</span></div>
<div style="position:absolute;left:0;top:881px;width:100%;height:27px;"></div>
<div style="position:absolute;left:69.0px;top:881px;width:1px;height:27px;background:#d6d6d6"></div>
<div style="position:absolute;left:90.6px;top:881px;width:1px;height:27px;background:#d6d6d6"></div>
<div style="position:absolute;left:112.2px;top:881px;width:1px;height:27px;background:#d6d6d6"></div>
<div style="position:absolute;left:133.8px;top:881px;width:1px;height:27px;background:#d6d6d6"></div>
<div style="position:absolute;left:32.4px;top:881px;height:27px;font-family:'Liberation Mono', monospace;font-size:18px;line-height:27px;color:#a0a0a0;font-weight:normal;white-space:pre"><span style="position:relative;top:1.7px">96</span></div>
<div style="position:absolute;z-index:2;left:69px;top:881px;height:27px;font-family:'Liberation Mono', monospace;font-size:18px;line-height:27px;color:#000;white-space:pre;letter-spacing:0.04px"><span style="position:relative;top:1.7px">        explanation</span></div>
<div style="position:absolute;left:0;top:908px;width:100%;height:27px;"></div>
<div style="position:absolute;left:69.0px;top:908px;width:1px;height:27px;background:#d6d6d6"></div>
<div style="position:absolute;left:90.6px;top:908px;width:1px;height:27px;background:#d6d6d6"></div>
<div style="position:absolute;left:112.2px;top:908px;width:1px;height:27px;background:#d6d6d6"></div>
<div style="position:absolute;left:32.4px;top:908px;height:27px;font-family:'Liberation Mono', monospace;font-size:18px;line-height:27px;color:#a0a0a0;font-weight:normal;white-space:pre"><span style="position:relative;top:1.7px">97</span></div>
<div style="position:absolute;z-index:2;left:69px;top:908px;height:27px;font-family:'Liberation Mono', monospace;font-size:18px;line-height:27px;color:#000;white-space:pre;letter-spacing:0.04px"><span style="position:relative;top:1.7px">      })</span></div>
<div style="position:absolute;left:0;top:935px;width:100%;height:27px;"></div>
<div style="position:absolute;left:69.0px;top:935px;width:1px;height:27px;background:#d6d6d6"></div>
<div style="position:absolute;left:90.6px;top:935px;width:1px;height:27px;background:#d6d6d6"></div>
<div style="position:absolute;left:32.4px;top:935px;height:27px;font-family:'Liberation Mono', monospace;font-size:18px;line-height:27px;color:#a0a0a0;font-weight:normal;white-space:pre"><span style="position:relative;top:1.7px">98</span></div>
<div style="position:absolute;z-index:2;left:69px;top:935px;height:27px;font-family:'Liberation Mono', monospace;font-size:18px;line-height:27px;color:#000;white-space:pre;letter-spacing:0.04px"><span style="position:relative;top:1.7px">    }</span></div>
<div style="position:absolute;left:0;top:962px;width:100%;height:27px;"></div>
<div style="position:absolute;left:69.0px;top:962px;width:1px;height:27px;background:#d6d6d6"></div>
<div style="position:absolute;left:32.4px;top:962px;height:27px;font-family:'Liberation Mono', monospace;font-size:18px;line-height:27px;color:#a0a0a0;font-weight:normal;white-space:pre"><span style="position:relative;top:1.7px">99</span></div>
<div style="position:absolute;z-index:2;left:69px;top:962px;height:27px;font-family:'Liberation Mono', monospace;font-size:18px;line-height:27px;color:#000;white-space:pre;letter-spacing:0.04px"><span style="position:relative;top:1.7px">  }</span></div>
<div style="position:absolute;z-index:1;left:971px;top:44px;width:1px;height:942px;background:#d6d6d6"></div>
</div></body></html>
